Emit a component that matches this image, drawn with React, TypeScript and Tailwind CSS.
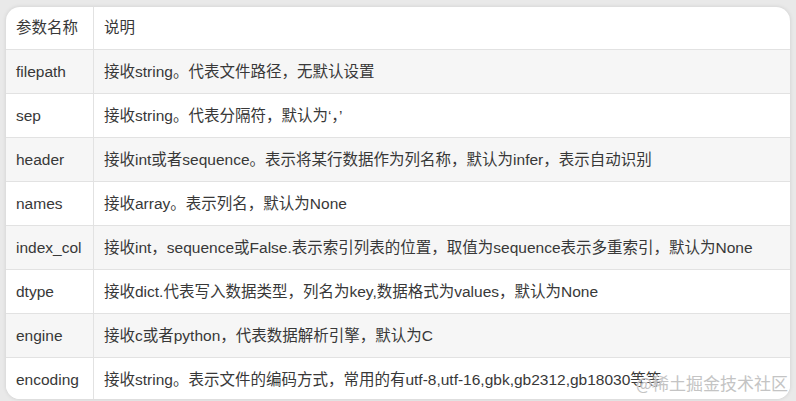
const rows: [string, string][] = [
  ['filepath', '接收string。代表文件路径，无默认设置'],
  ['sep', '接收string。代表分隔符，默认为‘，’'],
  ['header', '接收int或者sequence。表示将某行数据作为列名称，默认为infer，表示自动识别'],
  ['names', '接收array。表示列名，默认为None'],
  ['index_col', '接收int，sequence或False.表示索引列表的位置，取值为sequence表示多重索引，默认为None'],
  ['dtype', '接收dict.代表写入数据类型，列名为key,数据格式为values，默认为None'],
  ['engine', '接收c或者python，代表数据解析引擎，默认为C'],
  ['encoding', '接收string。表示文件的编码方式，常用的有utf-8,utf-16,gbk,gb2312,gb18030等等'],
];

export default function App() {
  return (
    <div
      className="relative h-[401px] w-[796px] overflow-hidden bg-[#e9e9e9] pl-[6px] pr-[6px] pt-[7px]"
      style={{ fontFamily: '"Liberation Sans", "Noto Sans CJK SC", sans-serif' }}
    >
      <div className="h-[392px] overflow-hidden rounded-[14px] bg-white text-[15.5px] text-[#383838] shadow-[0_0_4px_rgba(0,0,0,0.12)]">
        <div className="flex h-[43px] border-b border-[#e2e2e2]">
          <div className="flex w-[88px] items-center border-r border-[#e2e2e2] pl-[10px]">参数名称</div>
          <div className="flex flex-1 items-center pl-[10px]">说明</div>
        </div>
        {rows.map(([name, desc], i) => (
          <div
            key={name}
            className={`flex h-[44px] border-b border-[#e2e2e2] ${i % 2 === 0 ? 'bg-[#f6f6f6]' : 'bg-white'}`}
          >
            <div className="flex w-[88px] items-center border-r border-[#e2e2e2] pl-[10px]">{name}</div>
            <div className="flex flex-1 items-center whitespace-nowrap pl-[10px]">{desc}</div>
          </div>
        ))}
      </div>
      <div
        className="absolute bottom-[6px] right-[8px] text-[17px] text-[#c4c4c4] [text-shadow:0_0_2px_#fff]"
        style={{ fontFamily: '"Noto Sans CJK SC", serif' }}
      >
        @稀土掘金技术社区
      </div>
    </div>
  );
}
